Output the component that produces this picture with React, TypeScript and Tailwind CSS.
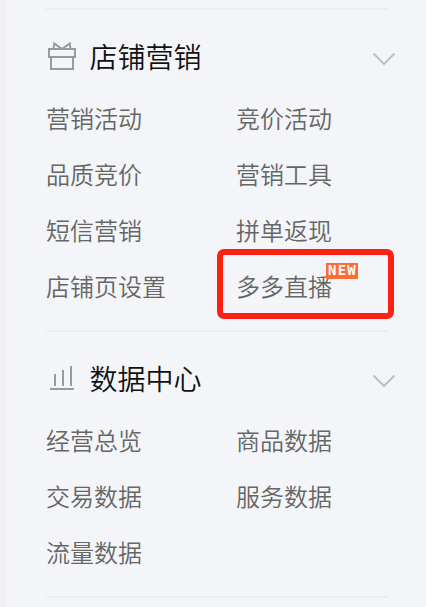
import type { ReactNode } from "react";

function GiftIcon() {
  return (
    <svg className="mb-1" width="28" height="28" viewBox="0 0 28 28" fill="none" stroke="#999a9c" strokeWidth="2">
      <path d="M1 7h26v8H1zM3 15v12h22V15M5.5 7L6.2 1.4L14 7l7.8-5.6L22.5 7" />
    </svg>
  );
}

function ChartIcon() {
  return (
    <svg className="mb-1" width="28" height="28" viewBox="0 0 28 28" fill="none" stroke="#999a9c" strokeWidth="2">
      <path d="M2 25h24M7 10v12M15 6v16M23 2v20" />
    </svg>
  );
}

function Chevron() {
  return (
    <svg width="24" height="14" viewBox="0 0 24 14" fill="none" stroke="#bbc0c2" strokeWidth="2">
      <path d="M1.5 1.5L12 12L22.5 1.5" />
    </svg>
  );
}

function NewBadge() {
  return (
    <span className="absolute left-[90px] top-1 h-4 w-8 bg-[#ff6b35] pl-0.5 font-['DejaVu_Sans_Mono',monospace] text-[14px] font-bold leading-[15px] tracking-[1.2px] text-white">
      NEW
    </span>
  );
}

function Section({ icon, title, items }: { icon: ReactNode; title: string; items: string[] }) {
  return (
    <section className="pb-[15px]">
      <div className="h-0.5 w-[342px] bg-[#e9efee]" />
      <header className="mt-5 flex h-14 w-[350px] items-center pl-0.5">
        {icon}
        <h2 className="ml-[13.5px] pb-[3px] text-[28px] leading-[53px] text-[#111]">{title}</h2>
        <span className="ml-auto pt-px">
          <Chevron />
        </span>
      </header>
      <ul className="mt-[5px] grid grid-cols-[190px_190px] text-[24px] leading-[54px] text-[#666]">
        {items.map((item) => (
          <li key={item} className="relative h-14 whitespace-nowrap">
            {item}
            {item === "多多直播" && (
              <>
                <NewBadge />
                <span className="absolute -left-[19px] -top-[10px] h-[70px] w-[177px] rounded-[7px] border-[6px] border-[#ff2012]" />
              </>
            )}
          </li>
        ))}
      </ul>
    </section>
  );
}

export default function App() {
  return (
    <div className="h-[607px] w-[426px] overflow-hidden border-l-[6px] border-[#f0f0f0] bg-[#f3f5f9] pl-10 pt-2 font-['Noto_Sans_CJK_SC',sans-serif] font-[350]">
      <Section
        icon={<GiftIcon />}
        title="店铺营销"
        items={["营销活动", "竞价活动", "品质竞价", "营销工具", "短信营销", "拼单返现", "店铺页设置", "多多直播"]}
      />
      <Section
        icon={<ChartIcon />}
        title="数据中心"
        items={["经营总览", "商品数据", "交易数据", "服务数据", "流量数据"]}
      />
      <div className="h-0.5 w-[342px] bg-[#e9efee]" />
    </div>
  );
}
